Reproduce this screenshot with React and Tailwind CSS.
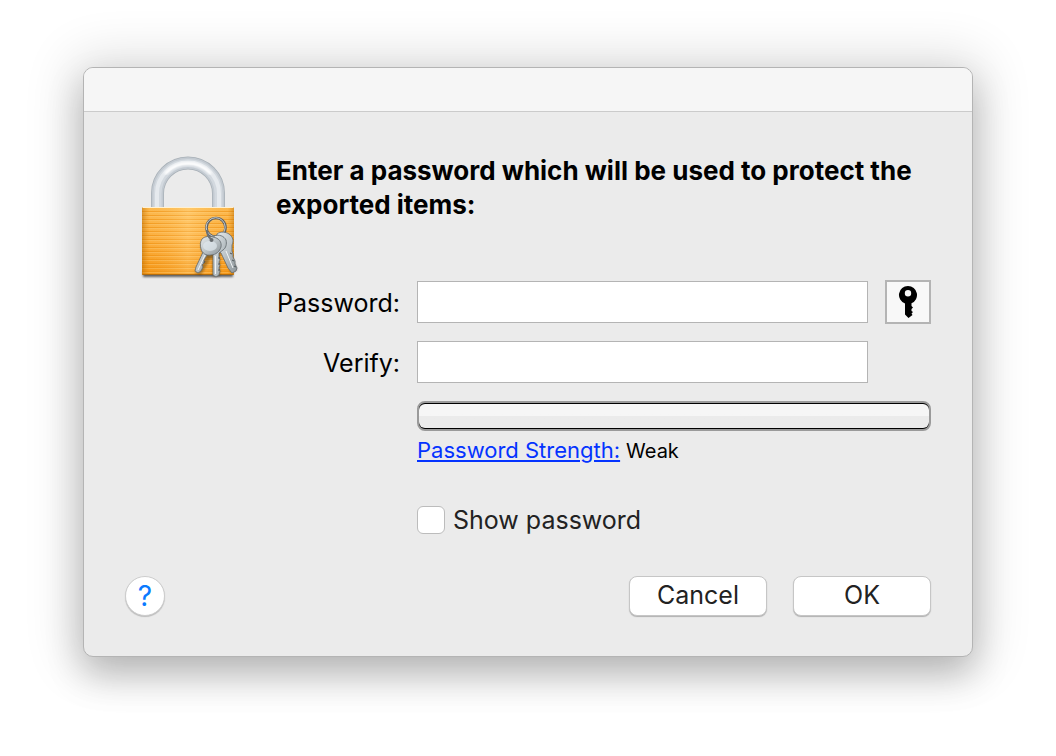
import React, { useState } from 'react';

// Padlock with a small bunch of keys hanging over its corner
const LockIcon = () => (
  <svg className="w-[120px] h-[130px]" viewBox="-5 9 120 130" aria-hidden="true">
    <defs>
      <linearGradient id="body" x1="0" y1="0" x2="0" y2="1">
        <stop offset="0" stopColor="#ffc15c" />
        <stop offset="0.5" stopColor="#ffb54a" />
        <stop offset="1" stopColor="#f79a1c" />
      </linearGradient>
      <linearGradient id="sides" x1="0" y1="0" x2="1" y2="0">
        <stop offset="0" stopColor="#b86a00" stopOpacity="0.55" />
        <stop offset="0.08" stopColor="#e88a00" stopOpacity="0.15" />
        <stop offset="0.5" stopColor="#ffdc90" stopOpacity="0.3" />
        <stop offset="0.93" stopColor="#e88a00" stopOpacity="0.15" />
        <stop offset="1" stopColor="#b86a00" stopOpacity="0.5" />
      </linearGradient>
      <pattern id="ridges" width="8" height="4" patternUnits="userSpaceOnUse">
        <rect y="2" width="8" height="1" fill="#ef8f10" fillOpacity="0.6" />
        <rect y="3" width="8" height="1" fill="#ffd58a" fillOpacity="0.4" />
      </pattern>
      <linearGradient id="metal" x1="0" y1="0" x2="1" y2="1">
        <stop offset="0" stopColor="#e6eaec" />
        <stop offset="0.5" stopColor="#bcc4c8" />
        <stop offset="1" stopColor="#8c9498" />
      </linearGradient>
      <filter id="soft" x="-20%" y="-20%" width="140%" height="140%">
        <feGaussianBlur stdDeviation="1.2" />
      </filter>
    </defs>

    {/* Shackle */}
    <g fill="none">
      <path d="M27.5 64V48.500a30.500 30.500 0 0 1 61 0V64" stroke="#a8b0b7" strokeWidth="13" />
      <path d="M27.5 64V48.500a30.500 30.500 0 0 1 61 0V64" stroke="#c3cad1" strokeWidth="11.500" />
      <path d="M27.5 64V48.500a30.500 30.500 0 0 1 61 0V64" stroke="#d3d9df" strokeWidth="8" />
      <path d="M27 64V48.500a31 31 0 0 1 62 0V64" stroke="#e6eaee" strokeWidth="4" />
      <path d="M36 28a30.500 30.500 0 0 1 44 0" stroke="#fff" strokeWidth="3" strokeLinecap="round" filter="url(#soft)" />
    </g>

    {/* Body */}
    <rect x="13" y="126" width="90" height="6" fill="#000" fillOpacity="0.6" filter="url(#soft)" />
    <rect x="12" y="62" width="92" height="68" rx="1" fill="url(#body)" />
    <rect x="12" y="64" width="92" height="65" fill="url(#ridges)" />
    <rect x="12" y="62" width="92" height="68" rx="1" fill="url(#sides)" />
    <path d="M12.500 62.500h91" stroke="#fff1d2" />
    <path d="M12.500 129.500h91" stroke="#b06c10" />

    {/* Keys */}
    <g fill="#402800" fillOpacity="0.4" filter="url(#soft)">
      <circle cx="82" cy="102" r="11" />
      <path d="M74 107L65 128l6 2 11-19zM82 108l1 24 7-1V108zM92 100l9 28 6-3L98 98z" />
    </g>
    <circle cx="86" cy="82.500" r="9.500" fill="none" stroke="#5c6062" strokeWidth="2.600" />
    <circle cx="85.700" cy="82.200" r="9.500" fill="none" stroke="#c8ccce" strokeWidth="1" />
    <g fill="url(#metal)" stroke="#62696d" strokeWidth="0.800" strokeLinejoin="round">
      <path d="M87 89c4-3 9-2 12 0 4 3 5 7 3 11v6l1 3v3l2 4v3l2 4-1 3-4 2-4-5-7-15-5-4z" />
      <path d="M84 91c5-2 10 0 12 4 1 4 0 8-3 10l-4 3v4l1 3-1 2 1 3-1 3 1 3-1 4-3 2-3-2V107z" />
      <path d="M79 106l-3 6-2 3v3l-2 2 1 2-2 4-3 2-3-2 1-4 9-19z" />
      <path d="M72 94c3-3 8-3 11-2 6 1 9 5 8 10-1 4-5 8-10 8-5 1-9-2-10-6-1-4-1-7 1-10z" />
    </g>
    <ellipse cx="80" cy="101" rx="7" ry="5" fill="#dfe8ee" fillOpacity="0.700" />
    <path d="M85.500 111v18M75 110l-7 15M96 106l7 17" stroke="#f2f5f6" strokeWidth="1" fill="none" />
    <path d="M89 112v2M89 118v2M89 124v2M100 108l2 1M102 115l2 1M104 121l2 1M75 116l-1 2" stroke="#4e5558" strokeWidth="1" fill="none" />
    <circle cx="81.500" cy="95" r="2" fill="#686d70" />
    <path d="M77 85c0 4 1 7 4 9" stroke="#6c7174" strokeWidth="2" fill="none" />
  </svg>
);

const KeyIcon = () => (
  <svg className="w-[20px] h-[32px]" viewBox="0 0 20 32" aria-hidden="true">
    <path
      fill="#000"
      fillRule="evenodd"
      d="M10 0a9 9 0 0 1 3.500 17.300v2.700l1.500 1.500-1.500 1.500v2l1.500 1-1.500 1.500 1 1.500L10.500 32 7 28.500V17.500A9 9 0 0 1 10 0zM10 4a3.200 3.200 0 1 0 0 6.400A3.200 3.200 0 0 0 10 4z"
    />
  </svg>
);

const PasswordField = ({ id, label, type, value, onChange }) => (
  <>
    <label htmlFor={id} className="pt-px text-right text-[25px] leading-8">
      {label}
    </label>
    <input
      id={id}
      type={type}
      value={value}
      onChange={(e) => onChange(e.target.value)}
      className="h-[42px] w-full min-w-0 border border-[#b4b4b4] bg-white px-2 text-[25px] focus:outline-none"
    />
  </>
);

const App = () => {
  const [password, setPassword] = useState('');
  const [verify, setVerify] = useState('');
  const [showPassword, setShowPassword] = useState(false);
  const fieldType = showPassword ? 'text' : 'password';

  return (
    <main className="min-h-screen bg-white px-[83px] py-[67px] font-['Inter','Liberation_Sans',sans-serif] text-black">
      <div
        role="dialog"
        aria-labelledby="dialog-title"
        className="overflow-hidden rounded-[10px] border border-[#b4b4b4] bg-[#ebebeb] shadow-[0_0_50px_12px_rgba(0,0,0,0.12),0_18px_36px_rgba(0,0,0,0.22)]"
      >
        {/* Title bar */}
        <div className="h-11 border-b border-[#cbcbcb] bg-[#f6f6f6]" />

        <form className="px-[41px] pt-[42px] pb-10" onSubmit={(e) => e.preventDefault()}>
          <div className="flex">
            <div className="w-[151px] shrink-0">
              <LockIcon />
            </div>

            <div className="min-w-0 flex-1">
              <h1 id="dialog-title" className="text-[26px] leading-[34px] font-bold">
                Enter a password which will be used to protect the exported items:
              </h1>

              <div className="mt-[58px] grid grid-cols-[124px_1fr_46px] items-center gap-x-[17px] gap-y-[17px]">
                <PasswordField id="password" label="Password:" type={fieldType} value={password} onChange={setPassword} />
                <button
                  type="button"
                  aria-label="Password Assistant"
                  className="flex h-11 items-center justify-center border-2 border-[#b4b4b4] bg-[#f8f8f8]"
                >
                  <KeyIcon />
                </button>
                <PasswordField id="verify" label="Verify:" type={fieldType} value={verify} onChange={setVerify} />
              </div>

              <div className="mt-[18px] pl-[141px]">
                {/* Empty strength meter */}
                <div
                  role="meter"
                  aria-label="Password strength"
                  aria-valuenow={0}
                  aria-valuemin={0}
                  aria-valuemax={100}
                  className="h-[30px] rounded-lg border-2 border-[#9a9a9a] bg-black pt-px pb-px"
                >
                  <div className="h-full rounded-md bg-linear-to-b from-[#f6f6f6] from-50% to-[#ebebeb] to-50%" />
                </div>
                <div className="mt-[3px] flex items-baseline gap-1.5 leading-8">
                  <a href="#strength" className="text-[22px] text-[#0433ff] underline decoration-2 underline-offset-2">
                    Password Strength:
                  </a>
                  <span className="text-[20px]">Weak</span>
                </div>
                <label className="mt-[37px] flex items-center gap-2 text-[25px] leading-8 text-[#222]">
                  <input
                    type="checkbox"
                    checked={showPassword}
                    onChange={(e) => setShowPassword(e.target.checked)}
                    className="h-7 w-7 appearance-none rounded-md border border-[#bcbcbc] bg-white checked:bg-[#0a7aff]"
                  />
                  Show password
                </label>
              </div>
            </div>
          </div>

          <div className="mt-10 flex items-center gap-[26px] text-[25px] text-[#222]">
            <button
              type="button"
              aria-label="Help"
              className="mr-auto h-10 w-10 rounded-full border border-[#cdcdcd] bg-white text-[28px] leading-9 text-[#0a7aff] shadow-[0_1px_1px_rgba(0,0,0,0.2)]"
            >
              ?
            </button>
            <button
              type="button"
              className="h-10 w-[138px] rounded-lg border border-[#c6c6c6] bg-white shadow-[0_1px_1px_rgba(0,0,0,0.25)]"
            >
              Cancel
            </button>
            <button
              type="submit"
              className="h-10 w-[138px] rounded-lg border border-[#c6c6c6] bg-white shadow-[0_1px_1px_rgba(0,0,0,0.25)]"
            >
              OK
            </button>
          </div>
        </form>
      </div>
    </main>
  );
};

export default App;
